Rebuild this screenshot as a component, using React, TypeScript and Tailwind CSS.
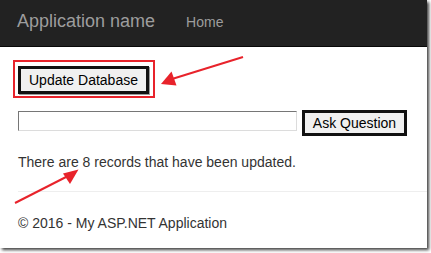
import React from "react";

export default function App() {
  return (
    <div className="w-[431px] h-[253px] bg-white relative overflow-hidden" style={{ fontFamily: '"Liberation Sans", Arial, sans-serif' }}>
      <div className="w-[427px] h-[248px] bg-white shadow-[2px_2px_3px_rgba(0,0,0,0.75)] overflow-hidden flex flex-col">
        <nav className="h-[47px] bg-[#222222] border-b border-[#080808] flex items-start shrink-0">
          <span className="ml-[17px] mt-[11px] text-[18px] leading-[20px] text-[#9d9d9d]">Application name</span>
          <span className="ml-[31px] mt-[12px] text-[14px] leading-[20px] text-[#9d9d9d]">Home</span>
        </nav>
        <div className="px-[18px] flex flex-col text-[#333333]">
          <div className="mt-[19px] flex">
            <button className="h-[28px] px-[8px] border-[3px] border-[#111] bg-[#f0f0f0] text-[14px] leading-none text-black shadow-[1px_1px_0_#9a9a9a]">
              Update Database
            </button>
          </div>
          <div className="mt-[16px] flex items-start gap-[5px]">
            <input className="mt-[1px] w-[279px] h-[20px] border border-t-[#767676] border-l-[#767676] border-b-[#dcdcdc] border-r-[#dcdcdc] bg-white outline-none" />
            <button className="w-[105px] h-[26px] border-[3px] border-[#111] bg-[#f0f0f0] text-[14px] leading-none text-black">
              Ask Question
            </button>
          </div>
          <p className="mt-[16px] text-[14px] leading-[20px]">There are 8 records that have been updated.</p>
          <div className="mt-[19px] -mr-[18px] border-t border-[#eeeeee]" />
          <p className="mt-[21px] text-[14px] leading-[20px]">© 2016 - My ASP.NET Application</p>
        </div>
      </div>
      <div className="absolute left-[13px] top-[60px] w-[142px] h-[38px] border-2 border-[#e8232b]" />
      <svg className="absolute left-0 top-0" width="431" height="253" viewBox="0 0 431 253">
        <line x1="243" y1="57" x2="172" y2="79" stroke="#e8232b" strokeWidth="2" />
        <polygon points="161,84 171.5,71.5 176.5,85.5" fill="#e8232b" />
        <line x1="15" y1="203" x2="68" y2="176" stroke="#e8232b" strokeWidth="2" />
        <polygon points="78.5,169.5 63,173.5 70,184" fill="#e8232b" />
      </svg>
    </div>
  );
}
